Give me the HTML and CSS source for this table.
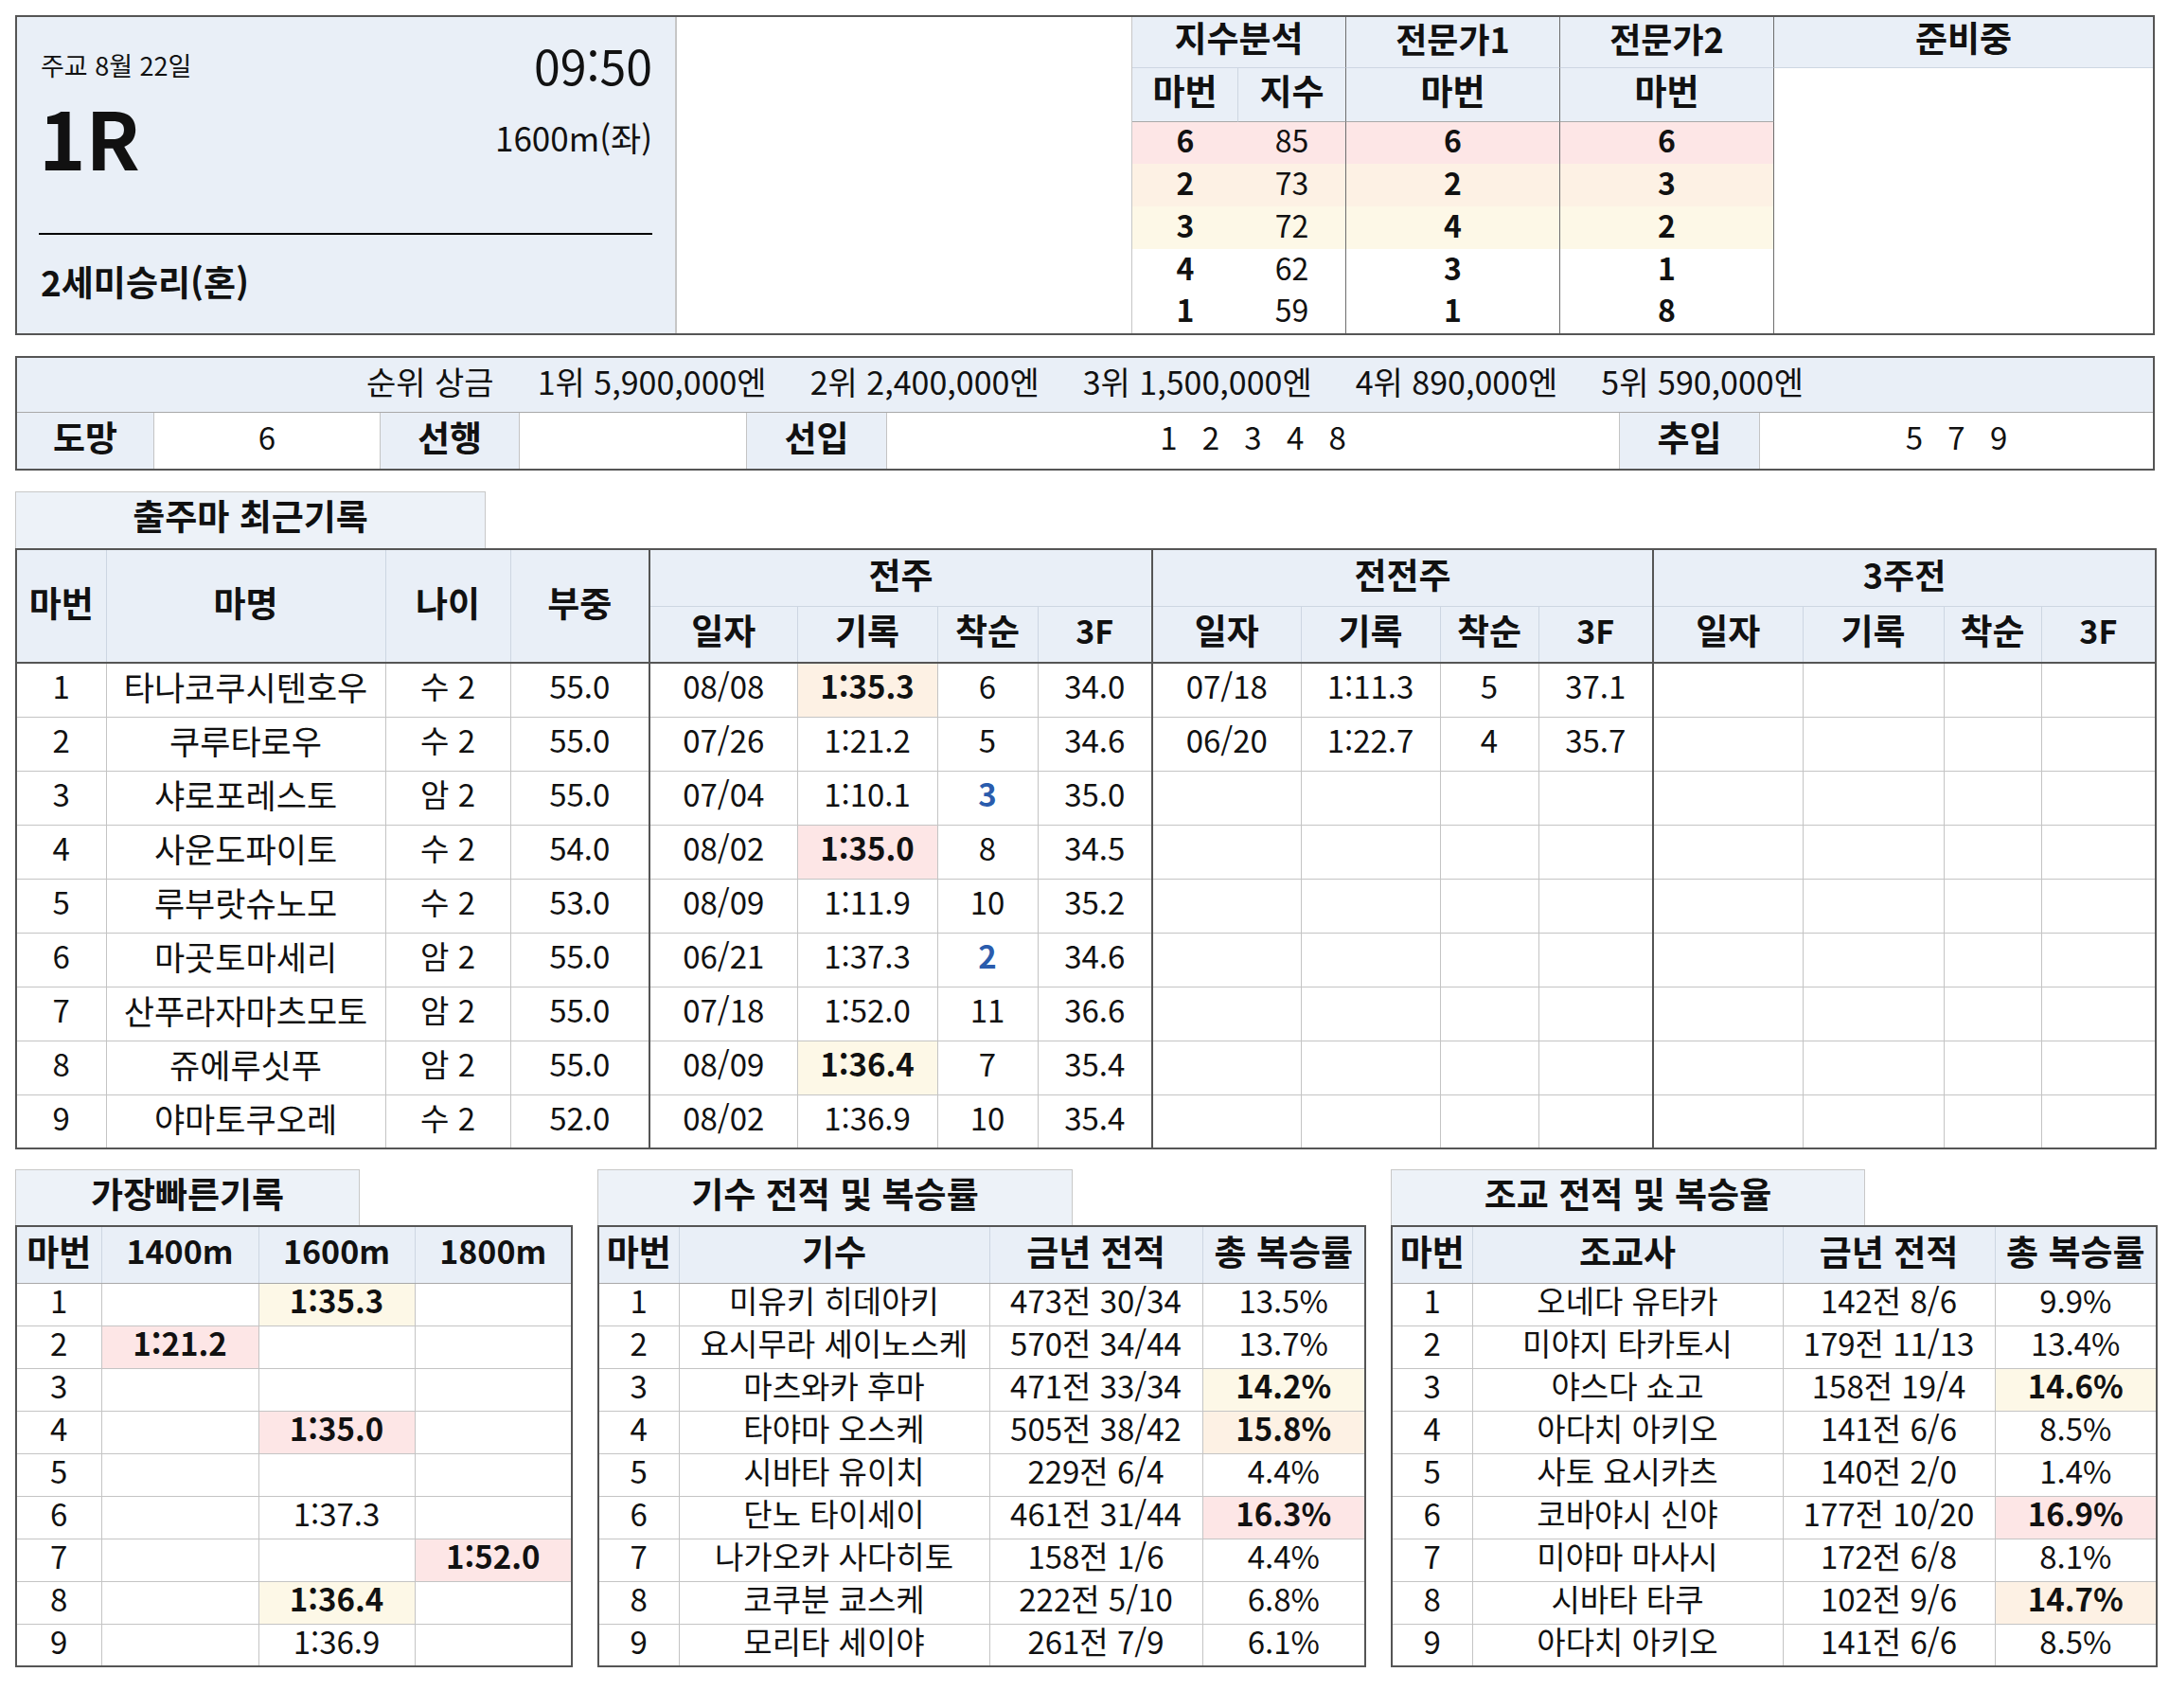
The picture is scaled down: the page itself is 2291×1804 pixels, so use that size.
FILE: index.html
```html
<!DOCTYPE html>
<html lang="ko">
<head>
<meta charset="utf-8">
<title>1R 주교</title>
<link rel="stylesheet" href="styles.css">
</head>
<body>
<div class="page">

  <div class="top">
    <div class="info">
      <div class="info-top"><span class="date">주교 8월 22일</span><span class="time">09:50</span></div>
      <div class="info-mid"><span class="race">1R</span><span class="dist">1600m(좌)</span></div>
      <div class="rule"></div>
      <div class="cls">2세미승리(혼)</div>
    </div>
    <div class="blank"></div>
    <div class="tc th1 span2 vd">지수분석</div>
    <div class="tc th1 vd mix">전문가1</div>
    <div class="tc th1 vd mix">전문가2</div>
    <div class="tc th1">준비중</div>
    <div class="prep"></div>
    <div class="tc th2 vl">마번</div>
    <div class="tc th2 vd">지수</div>
    <div class="tc th2 vd">마번</div>
    <div class="tc th2 vd">마번</div>

    <div class="tc d p1 b">6</div><div class="tc d p1 vd">85</div><div class="tc d p1 vd b">6</div><div class="tc d p1 vd b">6</div>
    <div class="tc d p2 b">2</div><div class="tc d p2 vd">73</div><div class="tc d p2 vd b">2</div><div class="tc d p2 vd b">3</div>
    <div class="tc d p3 b">3</div><div class="tc d p3 vd">72</div><div class="tc d p3 vd b">4</div><div class="tc d p3 vd b">2</div>
    <div class="tc d b">4</div><div class="tc d vd">62</div><div class="tc d vd b">3</div><div class="tc d vd b">1</div>
    <div class="tc d b">1</div><div class="tc d vd">59</div><div class="tc d vd b">1</div><div class="tc d vd b">8</div>
  </div>

  <div class="sec">
    <div class="prize"><span>순위 상금</span><span>1위 5,900,000엔</span><span>2위 2,400,000엔</span><span>3위 1,500,000엔</span><span>4위 890,000엔</span><span>5위 590,000엔</span></div>
    <div class="lab">도망</div><div class="val">6</div>
    <div class="lab">선행</div><div class="val"></div>
    <div class="lab">선입</div><div class="val nums">1 2 3 4 8</div>
    <div class="lab">추입</div><div class="val nums last">5 7 9</div>
  </div>

  <div class="tab tab-main">출주마 최근기록</div>
  <table class="rec">
    <colgroup>
      <col class="w95"><col class="w295"><col class="w132"><col class="w147">
      <col class="w156"><col class="w148"><col class="w106"><col class="w121">
      <col class="w157"><col class="w147"><col class="w104"><col class="w121">
      <col class="w158"><col class="w149"><col class="w103"><col class="w121">
    </colgroup>
    <thead>
      <tr>
        <th rowspan="2" class="hb">마번</th>
        <th rowspan="2" class="hb">마명</th>
        <th rowspan="2" class="hb">나이</th>
        <th rowspan="2" class="hb">부중</th>
        <th colspan="4" class="gl">전주</th>
        <th colspan="4" class="gl">전전주</th>
        <th colspan="4" class="gl mix">3주전</th>
      </tr>
      <tr>
        <th class="hb gl">일자</th><th class="hb">기록</th><th class="hb">착순</th><th class="hb num">3F</th>
        <th class="hb gl">일자</th><th class="hb">기록</th><th class="hb">착순</th><th class="hb num">3F</th>
        <th class="hb gl">일자</th><th class="hb">기록</th><th class="hb">착순</th><th class="hb num">3F</th>
      </tr>
    </thead>
    <tbody>
      <tr><td>1</td><td>타나코쿠시텐호우</td><td>수 2</td><td>55.0</td><td class="gl">08/08</td><td class="p2 b">1:35.3</td><td>6</td><td>34.0</td><td class="gl">07/18</td><td>1:11.3</td><td>5</td><td>37.1</td><td class="gl"></td><td></td><td></td><td></td></tr>
      <tr><td>2</td><td>쿠루타로우</td><td>수 2</td><td>55.0</td><td class="gl">07/26</td><td>1:21.2</td><td>5</td><td>34.6</td><td class="gl">06/20</td><td>1:22.7</td><td>4</td><td>35.7</td><td class="gl"></td><td></td><td></td><td></td></tr>
      <tr><td>3</td><td>샤로포레스토</td><td>암 2</td><td>55.0</td><td class="gl">07/04</td><td>1:10.1</td><td class="blue b">3</td><td>35.0</td><td class="gl"></td><td></td><td></td><td></td><td class="gl"></td><td></td><td></td><td></td></tr>
      <tr><td>4</td><td>사운도파이토</td><td>수 2</td><td>54.0</td><td class="gl">08/02</td><td class="p1 b">1:35.0</td><td>8</td><td>34.5</td><td class="gl"></td><td></td><td></td><td></td><td class="gl"></td><td></td><td></td><td></td></tr>
      <tr><td>5</td><td>루부랏슈노모</td><td>수 2</td><td>53.0</td><td class="gl">08/09</td><td>1:11.9</td><td>10</td><td>35.2</td><td class="gl"></td><td></td><td></td><td></td><td class="gl"></td><td></td><td></td><td></td></tr>
      <tr><td>6</td><td>마곳토마세리</td><td>암 2</td><td>55.0</td><td class="gl">06/21</td><td>1:37.3</td><td class="blue b">2</td><td>34.6</td><td class="gl"></td><td></td><td></td><td></td><td class="gl"></td><td></td><td></td><td></td></tr>
      <tr><td>7</td><td>산푸라자마츠모토</td><td>암 2</td><td>55.0</td><td class="gl">07/18</td><td>1:52.0</td><td>11</td><td>36.6</td><td class="gl"></td><td></td><td></td><td></td><td class="gl"></td><td></td><td></td><td></td></tr>
      <tr><td>8</td><td>쥬에루싯푸</td><td>암 2</td><td>55.0</td><td class="gl">08/09</td><td class="p3 b">1:36.4</td><td>7</td><td>35.4</td><td class="gl"></td><td></td><td></td><td></td><td class="gl"></td><td></td><td></td><td></td></tr>
      <tr><td>9</td><td>야마토쿠오레</td><td>수 2</td><td>52.0</td><td class="gl">08/02</td><td>1:36.9</td><td>10</td><td>35.4</td><td class="gl"></td><td></td><td></td><td></td><td class="gl"></td><td></td><td></td><td></td></tr>
    </tbody>
  </table>

  <div class="bottom">
    <div class="blk blk-fast">
      <div class="tab tab-fast">가장빠른기록</div>
      <table class="bt">
        <colgroup><col class="w90"><col class="w166"><col class="w165"><col class="w166"></colgroup>
        <thead><tr><th>마번</th><th class="num">1400m</th><th class="num">1600m</th><th class="num">1800m</th></tr></thead>
        <tbody>
          <tr><td>1</td><td></td><td class="p3 b">1:35.3</td><td></td></tr>
          <tr><td>2</td><td class="p1 b">1:21.2</td><td></td><td></td></tr>
          <tr><td>3</td><td></td><td></td><td></td></tr>
          <tr><td>4</td><td></td><td class="p1 b">1:35.0</td><td></td></tr>
          <tr><td>5</td><td></td><td></td><td></td></tr>
          <tr><td>6</td><td></td><td>1:37.3</td><td></td></tr>
          <tr><td>7</td><td></td><td></td><td class="p1 b">1:52.0</td></tr>
          <tr><td>8</td><td></td><td class="p3 b">1:36.4</td><td></td></tr>
          <tr><td>9</td><td></td><td>1:36.9</td><td></td></tr>
        </tbody>
      </table>
    </div>

    <div class="blk blk-jky">
      <div class="tab tab-jky">기수 전적 및 복승률</div>
      <table class="bt names">
        <colgroup><col class="w85"><col class="w328"><col class="w225"><col class="w172"></colgroup>
        <thead><tr><th>마번</th><th>기수</th><th>금년 전적</th><th>총 복승률</th></tr></thead>
        <tbody>
          <tr><td>1</td><td>미유키 히데아키</td><td>473전 30/34</td><td>13.5%</td></tr>
          <tr><td>2</td><td>요시무라 세이노스케</td><td>570전 34/44</td><td>13.7%</td></tr>
          <tr><td>3</td><td>마츠와카 후마</td><td>471전 33/34</td><td class="p3 b">14.2%</td></tr>
          <tr><td>4</td><td>타야마 오스케</td><td>505전 38/42</td><td class="p2 b">15.8%</td></tr>
          <tr><td>5</td><td>시바타 유이치</td><td>229전 6/4</td><td>4.4%</td></tr>
          <tr><td>6</td><td>단노 타이세이</td><td>461전 31/44</td><td class="p1 b">16.3%</td></tr>
          <tr><td>7</td><td>나가오카 사다히토</td><td>158전 1/6</td><td>4.4%</td></tr>
          <tr><td>8</td><td>코쿠분 쿄스케</td><td>222전 5/10</td><td>6.8%</td></tr>
          <tr><td>9</td><td>모리타 세이야</td><td>261전 7/9</td><td>6.1%</td></tr>
        </tbody>
      </table>
    </div>

    <div class="blk blk-trn">
      <div class="tab tab-trn">조교 전적 및 복승율</div>
      <table class="bt names">
        <colgroup><col class="w85"><col class="w328"><col class="w224"><col class="w171"></colgroup>
        <thead><tr><th>마번</th><th>조교사</th><th>금년 전적</th><th>총 복승률</th></tr></thead>
        <tbody>
          <tr><td>1</td><td>오네다 유타카</td><td>142전 8/6</td><td>9.9%</td></tr>
          <tr><td>2</td><td>미야지 타카토시</td><td>179전 11/13</td><td>13.4%</td></tr>
          <tr><td>3</td><td>야스다 쇼고</td><td>158전 19/4</td><td class="p3 b">14.6%</td></tr>
          <tr><td>4</td><td>아다치 아키오</td><td>141전 6/6</td><td>8.5%</td></tr>
          <tr><td>5</td><td>사토 요시카츠</td><td>140전 2/0</td><td>1.4%</td></tr>
          <tr><td>6</td><td>코바야시 신야</td><td>177전 10/20</td><td class="p1 b">16.9%</td></tr>
          <tr><td>7</td><td>미야마 마사시</td><td>172전 6/8</td><td>8.1%</td></tr>
          <tr><td>8</td><td>시바타 타쿠</td><td>102전 9/6</td><td class="p2 b">14.7%</td></tr>
          <tr><td>9</td><td>아다치 아키오</td><td>141전 6/6</td><td>8.5%</td></tr>
        </tbody>
      </table>
    </div>
  </div>

</div>
</body>
</html>
```

FILE: styles.css
```css
:root {
  --hd: #e9eff7;
  --tabbg: #edf2f8;
  --dark: #555555;
  --line: #c4c4c4;
  --hline: #cdd6e2;
  --p1: #fde6e6;
  --p2: #fdf1e4;
  --p3: #fdf8e7;
  --blue: #2a5cad;
}

* { box-sizing: border-box; }

html, body {
  margin: 0;
  padding: 0;
  background: #ffffff;
}

body {
  font-family: "Noto Sans CJK KR", "Noto Sans", sans-serif;
  color: #111111;
  font-size: 33px;
}

.page {
  padding: 16px 0 0 16px;
  width: 2292px;
}

/* ---------- top box ---------- */
.top {
  width: 2260px;
  display: grid;
  grid-template-columns: 697px 481px 112px 114px 226px 226px 400px;
  grid-template-rows: 54px 57px 44px 45px 45px 45px 44px;
  border: 2px solid var(--dark);
}

.info {
  grid-column: 1;
  grid-row: 1 / -1;
  background: var(--hd);
  border-right: 2px solid #c6c6c6;
  padding: 0 24px 0 23px;
  display: flex;
  flex-direction: column;
}

.info-top {
  margin-top: 24px;
  height: 52px;
  display: flex;
  justify-content: space-between;
  align-items: center;
}

.date { font-size: 27px; padding-left: 2px; }
.time { font-size: 50px; line-height: 1; }

.info-mid {
  margin-top: 2px;
  height: 96px;
  display: flex;
  justify-content: space-between;
  align-items: center;
}

.race { font-size: 84px; font-weight: 700; line-height: 1; }
.dist { font-size: 35px; }

.rule {
  margin-top: 54px;
  height: 2px;
  background: #000;
}

.cls {
  margin-top: 22px;
  height: 54px;
  display: flex;
  align-items: center;
  font-size: 37px;
  font-weight: 700;
  padding-left: 2px;
}

.blank {
  grid-column: 2;
  grid-row: 1 / -1;
  border-right: 1px solid #c6c6c6;
}

.prep {
  grid-column: 7;
  grid-row: 2 / -1;
}

.tc {
  display: flex;
  align-items: center;
  justify-content: center;
  line-height: 1;
  padding-bottom: 10px;
}

.span2 { grid-column: span 2; }

.th1 {
  background: var(--hd);
  font-weight: 700;
  font-size: 37px;
  border-bottom: 1px solid var(--hline);
}

.th2 {
  background: var(--hd);
  font-weight: 700;
  font-size: 37px;
  border-bottom: 1px solid #a9a9a9;
}

.mix { font-size: 36px; }

.vd { border-right: 1px solid #6e6e6e; }
.vl { border-right: 1px solid var(--hline); }

.d { font-size: 32px; padding-bottom: 8px; }
.b { font-weight: 700; }

.p1 { background: var(--p1); }
.p2 { background: var(--p2); }
.p3 { background: var(--p3); }
.blue { color: var(--blue); }

/* ---------- second box ---------- */
.sec {
  margin-top: 22px;
  width: 2260px;
  display: grid;
  grid-template-columns: 145px 239px 147px 240px 148px 774px 148px 415px;
  grid-template-rows: 58px 59px;
  border: 2px solid var(--dark);
}

.prize {
  grid-column: 1 / -1;
  background: var(--hd);
  border-bottom: 1px solid #a9a9a9;
  display: flex;
  justify-content: center;
  align-items: center;
  gap: 46px;
  font-size: 34px;
  line-height: 1;
  padding-bottom: 8px;
}

.lab, .val {
  display: flex;
  align-items: center;
  justify-content: center;
  border-right: 1px solid var(--line);
  line-height: 1;
  padding-bottom: 8px;
}

.lab {
  background: var(--hd);
  font-weight: 700;
  font-size: 37px;
}

.val { font-size: 33px; }
.val.last { border-right: none; }
.nums { word-spacing: 17px; }

/* ---------- tabs ---------- */
.tab {
  height: 60px;
  background: var(--tabbg);
  border: 1px solid #c8c8c8;
  border-bottom: none;
  display: flex;
  align-items: center;
  justify-content: center;
  font-weight: 700;
  font-size: 37px;
  line-height: 1;
  padding-bottom: 10px;
}

.tab-main { margin-top: 22px; width: 497px; }
.tab-fast { width: 364px; height: 59px; }
.tab-jky { width: 502px; height: 59px; }
.tab-trn { width: 501px; height: 59px; }

/* ---------- record table ---------- */
table {
  border-collapse: collapse;
  table-layout: fixed;
  border: 2px solid var(--dark);
}

th, td {
  padding: 0 0 8px 0;
  text-align: center;
  vertical-align: middle;
  border: 1px solid var(--line);
  white-space: nowrap;
  line-height: 1;
}

th {
  background: var(--hd);
  font-weight: 700;
  font-size: 37px;
  border-color: var(--hline);
}

th.num { font-size: 34px; }

td { font-size: 33px; }

.rec td:nth-child(2) { font-size: 35px; }
.names td:nth-child(2) { font-size: 33px; }

.rec { width: 2260px; }
.rec thead tr { height: 60px; }
.rec tbody tr { height: 57px; }
.rec th.hb { border-bottom: 2px solid var(--dark); }
.rec .gl { border-left: 2px solid var(--dark); }
.rec thead tr:first-child th { border-top: 2px solid var(--dark); }

.w95 { width: 95px; } .w295 { width: 295px; } .w132 { width: 132px; } .w147 { width: 147px; }
.w156 { width: 156px; } .w148 { width: 148px; } .w106 { width: 106px; } .w121 { width: 121px; }
.w157 { width: 157px; } .w104 { width: 104px; } .w158 { width: 158px; } .w149 { width: 149px; }
.w103 { width: 103px; } .w90 { width: 90px; } .w166 { width: 166px; } .w165 { width: 165px; }
.w85 { width: 85px; } .w328 { width: 328px; } .w225 { width: 225px; } .w172 { width: 172px; }
.w224 { width: 224px; } .w171 { width: 171px; }

/* ---------- bottom ---------- */
.bottom {
  margin-top: 21px;
  display: flex;
  gap: 28px;
  align-items: flex-start;
}

.blk-fast { width: 587px; }
.blk-jky { width: 810px; }
.blk-trn { width: 807px; }

.bt { width: 100%; }
.bt thead tr { height: 60px; }
.bt thead th { border-bottom: 1px solid #a9a9a9; border-top: 2px solid var(--dark); }
.bt tbody tr { height: 45px; }
```
